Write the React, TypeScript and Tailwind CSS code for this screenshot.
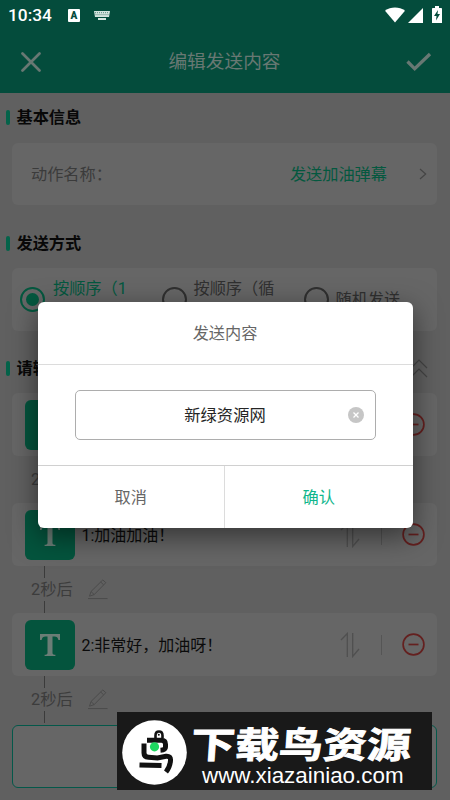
import React from "react";

const sans = "font-['Roboto','Noto_Sans_CJK_SC',sans-serif]";

function SectionTitle({ children, className }: { children: React.ReactNode; className: string }) {
  return (
    <div className={`flex items-center pl-[6px] ${className}`}>
      <span className="h-[15px] w-1 rounded-sm bg-[#04634a]" />
      <h2 className="ml-[6.5px] pt-px text-[16.2px] leading-6 font-bold text-[#080808]">{children}</h2>
    </div>
  );
}

function Radio({ selected }: { selected?: boolean }) {
  return (
    <span
      className={`flex size-[25px] shrink-0 items-center justify-center rounded-full border-2 ${
        selected ? "border-[#04583f]" : "border-[#303030]"
      }`}
    >
      {selected && <span className="size-[13px] rounded-full bg-[#04583f]" />}
    </span>
  );
}

function MessageRow({ text }: { text: string }) {
  return (
    <div className="ml-3 mr-[13px] flex h-[63px] items-center rounded-md bg-[#666] pl-[13px] pr-[12px]">
      <div className="flex size-[50px] items-center justify-center rounded-md bg-[#04543d]">
        <svg width="22" height="24" viewBox="0 0 22 24" fill="#6b7d76">
          <path d="M1 1h20v6h-1.6c-.5-2.6-1.6-3.6-4-3.6h-1.9v16.3c0 1.5.7 2 2.9 2.1V23H5.6v-1.2c2.2-.1 2.9-.6 2.9-2.1V3.4H6.6c-2.4 0-3.5 1-4 3.6H1z" />
        </svg>
      </div>
      <span className="ml-[6.5px] flex-1 whitespace-nowrap pt-[2px] text-[16px] text-[#0b0b0b]">{text}</span>
      <svg width="20" height="26" viewBox="0 0 20 26" fill="none" stroke="#505050" strokeWidth="1.3">
        <path d="M1 8 7.3 1.5V25M12.7 1v23.5L19 17" />
      </svg>
      <span className="ml-[21px] h-5 w-px bg-[#555]" />
      <svg className="ml-5" width="23" height="23" viewBox="0 0 23 23" fill="none" stroke="#64201f" strokeWidth="1.7">
        <circle cx="11.5" cy="11.5" r="10.4" />
        <path d="M6.5 11.5h10" />
      </svg>
    </div>
  );
}

function Delay() {
  return (
    <div className="flex h-[47px] pl-[31px]">
      <div className="flex w-[42px] flex-col">
        <span className="ml-[13px] h-3 w-px bg-[#3b3b3b]" />
        <span className="flex h-[23px] items-center whitespace-nowrap pt-[2px] text-[16.3px] text-[#3c3c3c]">2秒后</span>
        <span className="ml-[13px] h-3 w-px bg-[#3b3b3b]" />
      </div>
      <svg className="ml-[15px] mt-[13px]" width="20" height="21" viewBox="0 0 20 21" fill="none" stroke="#4b4b4b">
        <path d="M1.5 17.2 3 12.5 14.8.9l3 2.8L6.2 15.6zM3 12.5l3.2 3.1M12.7 3l2.9 2.8M0 19.6h19.5" />
      </svg>
    </div>
  );
}

function StatusBar() {
  return (
    <div className="flex h-[31px] items-center pl-2 pr-2 text-white">
      <span className="w-[44px] pt-px text-[17.3px] font-medium leading-none">10:34</span>
      <span className="ml-4 flex h-[13px] w-3 items-center justify-center rounded-[1px] bg-white text-[10px] font-black leading-none text-[#044c3c]">
        A
      </span>
      <svg className="ml-[14px]" width="16" height="9" viewBox="0 0 16 9">
        <path d="M0 0h16l-1 6H1zM4 7h8v2H4z" fill="#d5e4df" />
        <path d="M1 1.7h14M1.5 3.7h13" stroke="#044c3c" strokeOpacity=".6" strokeDasharray="1 1" />
      </svg>
      <span className="flex-1" />
      <svg className="-mt-px" width="20" height="16" viewBox="0 0 20 16" fill="#fff">
        <path d="M0 3.7C5.7-.7 14.3-.7 20 3.7L10 15.5z" />
      </svg>
      <svg className="ml-[3px]" width="15" height="15" viewBox="0 0 15 15" fill="#fff">
        <path d="M15 0v15H0z" />
      </svg>
      <svg className="-mt-[2px] ml-[9px]" width="10" height="17" viewBox="0 0 10 17">
        <path d="M3 0h4v2h2.2c.5 0 .8.3.8.8V17H0V2.8c0-.5.3-.8.8-.8H3z" fill="#fff" />
        <path d="m6 4-4 6h2.5L4 14.5 8 8H5.5z" fill="#044c3c" />
      </svg>
    </div>
  );
}

function Dialog() {
  return (
    <div className="absolute left-[37.5px] top-[302px] flex h-[226px] w-[375px] flex-col rounded-md bg-white shadow-[0_8px_28px_rgba(0,0,0,0.5)]">
      <h3 className="flex h-[63px] items-center justify-center border-b border-[#dcdcdc] pt-[3px] text-[16.2px] text-[#666]">
        发送内容
      </h3>
      <div className="flex h-[100px] items-center px-[37px]">
        <div className="flex h-[50px] flex-1 items-center rounded-[5px] border border-[#adadad] pr-[11px]">
          <span className="flex-1 pl-[27px] pt-[3px] text-center text-[16.3px] text-[#252525]">新绿资源网</span>
          <span className="flex size-4 items-center justify-center rounded-full bg-[#c6c6c6]">
            <svg width="6" height="6" viewBox="0 0 6 6" stroke="#fff" strokeWidth="1.3">
              <path d="m.5.5 5 5m0-5-5 5" />
            </svg>
          </span>
        </div>
      </div>
      <div className="flex h-[63px] border-t border-[#d0d0d0] text-[16.2px]">
        <button className="w-[187.5px] border-r border-[#dcdcdc] pt-[3px] text-[#666]">取消</button>
        <button className="flex-1 pt-[3px] text-[#0fb68c]">确认</button>
      </div>
    </div>
  );
}

function Watermark() {
  return (
    <div className="absolute left-[117px] top-[712px] flex h-[78px] w-[315px] bg-[#191919] pl-[5px] pt-2 text-white">
      <svg className="shrink-0" width="65" height="65" viewBox="0 0 65 65" fill="none">
        <circle cx="32.5" cy="32.5" r="32.3" fill="#fff" />
        <g stroke="#111" strokeWidth="5">
          <path d="M25 20.2h14.5q4 0 4 4V27q0 3-5 3.3" />
          <path d="M22 23.5V33q0 4 4.5 4.3l9 .7 8.5-1.8q5-.4 4.5 4.3-.5 6.5-4.5 11.5" />
          <path d="m17.5 45 22 .6" />
        </g>
        <circle cx="32.5" cy="26.8" r="4.6" fill="#1ed760" />
        <path d="M33.5 18v-2.5q0-4 3.5-4t3.5 4V18" stroke="#111" strokeWidth="2.6" />
        <circle cx="36.8" cy="14.8" r="1" fill="#111" />
      </svg>
      <div className="ml-[1px] flex w-[240px] flex-col">
        <svg width="240" height="44" viewBox="0 0 240 44" className="overflow-visible">
          <text
            x="5"
            y="38"
            textLength="220"
            lengthAdjust="spacingAndGlyphs"
            fill="#fff"
            transform="skewX(-4)"
            className="font-['Noto_Sans_CJK_SC',sans-serif] text-[36px] leading-none font-bold"
            stroke="#fff"
            strokeWidth=".9"
          >
            下载鸟资源
          </text>
        </svg>
        <span className="ml-[14px] whitespace-nowrap font-['Liberation_Sans',sans-serif] text-[22.4px] leading-[24px]">
          www.xiazainiao.com
        </span>
      </div>
    </div>
  );
}

export default function App() {
  return (
    <div className={`relative h-[800px] w-[450px] overflow-hidden bg-[#606060] ${sans}`}>
      <header className="h-[93px] bg-[#044c3c]">
        <StatusBar />
        <div className="flex h-[61px] items-center justify-between pl-[21px] pr-[18px]">
          <svg width="20" height="20" viewBox="0 0 20 20" stroke="#687873" strokeWidth="2.7" strokeLinecap="round">
            <path d="m1.5 1.5 17 17m0-17-17 17" />
          </svg>
          <h1 className="pl-[2px] pt-px text-[18.7px] text-[#687873]">编辑发送内容</h1>
          <svg width="26" height="20" viewBox="0 0 26 20" fill="none" stroke="#687873" strokeWidth="3.3">
            <path d="m1.5 9.5 7.2 7.3L24 2" />
          </svg>
        </div>
      </header>
      <main>
        <SectionTitle className="h-[50px] pb-px">基本信息</SectionTitle>
        <div className="ml-3 mr-[13px] flex h-[62px] items-center rounded-md bg-[#666] pl-[19px] pr-[10px] text-[16.2px]">
          <span className="flex-1 pt-[2px] text-[#3b3b3b]">动作名称：</span>
          <span className="pt-[2px] text-[#04583f]">发送加油弹幕</span>
          <svg className="ml-8" width="8" height="12" viewBox="0 0 8 12" fill="none" stroke="#454545" strokeWidth="1.2">
            <path d="m1 1 5.7 5L1 11" />
          </svg>
        </div>
        <SectionTitle className="h-[63px] pt-[13px]">发送方式</SectionTitle>
        <div className="ml-3 mr-[13px] grid h-[63px] grid-cols-[141.5px_142px_1fr] items-center rounded-md bg-[#666] pl-[8px] text-[16.2px] leading-[23px] text-[#303030]">
          <div className="flex items-center gap-2">
            <Radio selected />
            <span className="w-[84px] text-[#04583f]">按顺序（1<br />次）</span>
          </div>
          <div className="flex items-center gap-[7px]">
            <Radio />
            <span className="w-[84px]">按顺序（循<br />环）</span>
          </div>
          <div className="flex items-center gap-[7px]">
            <Radio />
            <span>随机发送</span>
          </div>
        </div>
        <div className="flex h-[62px] items-center justify-between pr-[22px]">
          <SectionTitle className="h-full pt-[12px]">请输入内容</SectionTitle>
          <svg className="mt-[12px]" width="18" height="19" viewBox="0 0 18 19" fill="none" stroke="#454545" strokeWidth="1.2">
            <path d="m1 9 8-8 8 8M1 18l8-8 8 8" />
          </svg>
        </div>
        <MessageRow text="0:新绿资源网" />
        <Delay />
        <MessageRow text="1:加油加油！" />
        <Delay />
        <MessageRow text="2:非常好，加油呀！" />
        <Delay />
        <div className="mb-3 ml-3 mr-[13px] mt-[2px] h-[63px] rounded-md border border-[#04584a] bg-[#666]" />
      </main>
      <Dialog />
      <Watermark />
    </div>
  );
}
